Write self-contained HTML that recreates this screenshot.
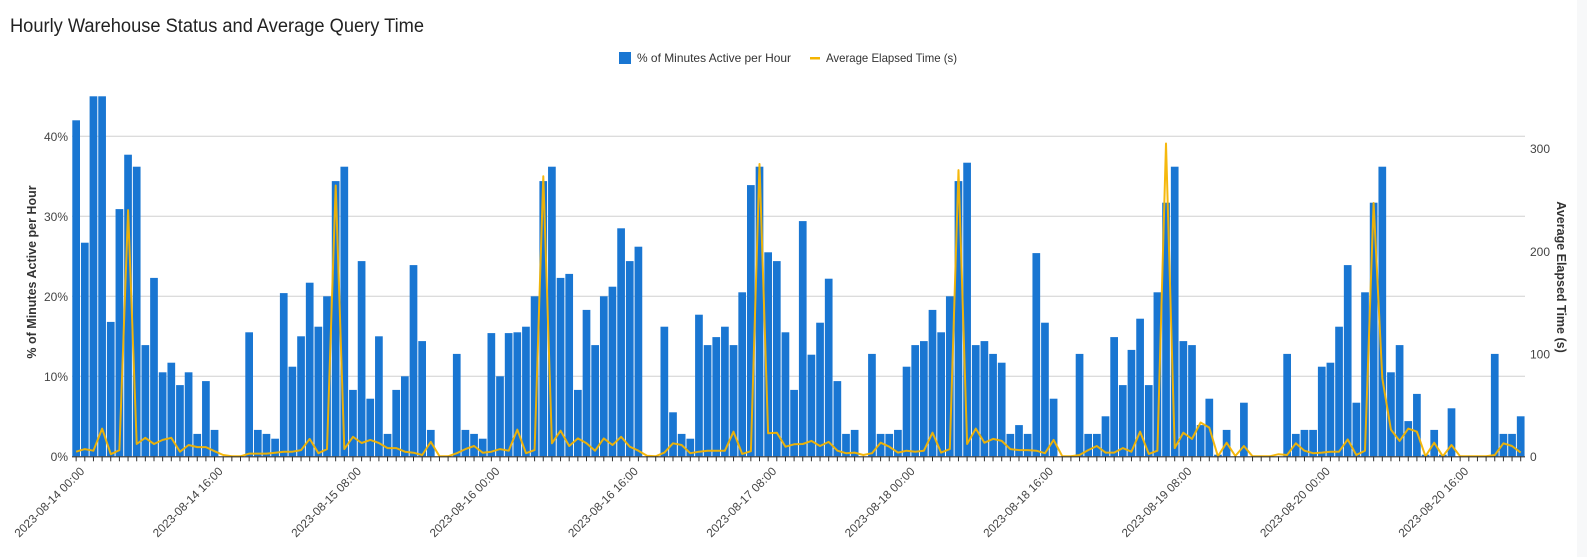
<!DOCTYPE html>
<html><head><meta charset="utf-8">
<style>
html,body{margin:0;padding:0;background:#fff;width:1587px;height:557px;overflow:hidden}
svg{display:block;font-family:"Liberation Sans",Arial,sans-serif}
</style></head>
<body>
<svg id="c" width="1587" height="557" xmlns="http://www.w3.org/2000/svg">
<rect x="1577" y="0" width="10" height="557" fill="#f7f8f9"/>
<text x="10" y="32" font-size="19" fill="#222" textLength="414" lengthAdjust="spacingAndGlyphs">Hourly Warehouse Status and Average Query Time</text>
<rect x="619" y="52" width="12" height="12" fill="#1976d2"/>
<text x="637" y="62" font-size="12" fill="#333" textLength="154" lengthAdjust="spacingAndGlyphs">% of Minutes Active per Hour</text>
<rect x="810" y="57" width="10" height="2.5" fill="#f4b400"/>
<text x="826" y="62" font-size="12" fill="#333" textLength="131" lengthAdjust="spacingAndGlyphs">Average Elapsed Time (s)</text>
<g id="grid"></g>
<g id="bars"></g>
<g id="line"></g>
<g id="axis"></g>
<text transform="translate(36,272) rotate(-90)" text-anchor="middle" font-size="12.5" font-weight="bold" fill="#333">% of Minutes Active per Hour</text>
<text transform="translate(1557,277) rotate(90)" text-anchor="middle" font-size="12.5" font-weight="bold" fill="#333">Average Elapsed Time (s)</text>
</svg>
<script>
var B=[42,26.7,45,45,16.8,30.9,37.7,36.2,13.9,22.3,10.5,11.7,8.9,10.5,2.8,9.4,3.3,0,0,0,15.5,3.3,2.8,2.2,
20.4,11.2,15.0,21.7,16.2,20.0,34.4,36.2,8.3,24.4,7.2,15.0,2.8,8.3,10.0,23.9,14.4,3.3,0,0,12.8,3.3,2.8,2.2,
15.4,10.0,15.4,15.5,16.2,20.0,34.4,36.2,22.3,22.8,8.3,18.3,13.9,20.0,21.2,28.5,24.4,26.2,0,0,16.2,5.5,2.8,2.2,
17.7,13.9,14.9,16.2,13.9,20.5,33.9,36.2,25.5,24.4,15.5,8.3,29.4,12.7,16.7,22.2,9.4,2.8,3.3,0,12.8,2.8,2.8,3.3,
11.2,13.9,14.4,18.3,15.5,20.0,34.4,36.7,13.9,14.4,12.8,11.7,2.8,3.9,2.8,25.4,16.7,7.2,0,0,12.8,2.8,2.8,5.0,
14.9,8.9,13.3,17.2,8.9,20.5,31.7,36.2,14.4,13.9,3.9,7.2,0.2,3.3,0,6.7,0,0,0,0,12.8,2.8,3.3,3.3,
11.2,11.7,16.2,23.9,6.7,20.5,31.7,36.2,10.5,13.9,4.4,7.8,0.2,3.3,0.2,6.0,0,0,0,0,12.8,2.8,2.8,5.0];
var L=[4.5,7,5.5,27,2,6,240,12,18,12,16,18,4.5,11,9,9,5,1.3,0,0,2.6,2.6,2.6,3.5,
4.5,4.5,6,17,3,7,264,7,19,13,16,13,8,8,4.5,3.5,1.3,14,0,0,3,7,10,3.5,
4.5,7,5.5,26,3,6,273,12.7,25,10,17.5,12.7,5.5,17.5,11,19,9.4,5.5,0.6,0,3.6,12.7,11,3,
4.5,5.5,5.5,5.5,24,2.3,5,285,22.4,23,9.4,11.7,12,15,10,14,5.5,3,3.6,1.3,3,13.3,9.4,3.6,
5.5,4.5,5.5,23,3.6,7,279,12,27,13.3,17,15,7,6,6,5.5,3,16,0,0,1.3,6,10,3.6,
3.6,8,4.5,24,2.3,5.5,305,8,23,17,33,28,0,13.3,0.3,10,0,0,0,2,1.3,12.7,5.5,3,
3.6,4.5,4.5,16.5,1.3,5.5,247,76,26,15,27,24,0,13.3,0,11,0,0,0,0,1.3,12.7,10,3.6];
var X0=72.3,P=8.65,Y0=456.3,NS="http://www.w3.org/2000/svg";
function el(t,a,p,txt){var e=document.createElementNS(NS,t);for(var k in a)e.setAttribute(k,a[k]);if(txt!=null)e.textContent=txt;document.getElementById(p).appendChild(e);return e;}
for(var g=1;g<=4;g++){var y=Y0-80*g;el('line',{x1:72,x2:1525,y1:y,y2:y,stroke:'#d0d0d0','stroke-width':1},'grid');
el('text',{x:68,y:y+4.5,'text-anchor':'end','font-size':12,fill:'#444'},'grid',(g*10)+'%');}
el('text',{x:68,y:Y0+4.5,'text-anchor':'end','font-size':12,fill:'#444'},'grid','0%');
[[0,456.5],[100,354],[200,251.5],[300,148.5]].forEach(function(r){el('text',{x:1530,y:r[1]+4.5,'font-size':12,fill:'#444'},'grid',String(r[0]));});
for(var i=0;i<168;i++){var h=B[i]*8;if(h>0)el('rect',{x:X0+i*P,y:Y0-h,width:7.7,height:h,fill:'#1976d2'},'bars');}
var pts=[];for(var i=0;i<168;i++){pts.push((X0+i*P+3.85).toFixed(1)+','+(Y0-L[i]*1.0257).toFixed(1));}
el('polyline',{points:pts.join(' '),fill:'none',stroke:'#f4b400','stroke-width':2,'stroke-linejoin':'round','stroke-opacity':0.95},'line');
el('line',{x1:72,x2:1525,y1:Y0+0.5,y2:Y0+0.5,stroke:'#333','stroke-width':1.2},'axis');
for(var i=0;i<168;i++){var cx=X0+i*P+3.85;el('line',{x1:cx,x2:cx,y1:Y0,y2:Y0+5,stroke:'#333','stroke-width':1},'axis');}
var labs=['2023-08-14 00:00','2023-08-14 16:00','2023-08-15 08:00','2023-08-16 00:00','2023-08-16 16:00','2023-08-17 08:00','2023-08-18 00:00','2023-08-18 16:00','2023-08-19 08:00','2023-08-20 00:00','2023-08-20 16:00'];
for(var j=0;j<labs.length;j++){var cx=X0+16*j*P+3.85;var ax=cx+9,ay=472;
el('text',{'text-anchor':'end','font-size':11.8,fill:'#444',transform:'translate('+ax+','+ay+') rotate(-45)'},'axis',labs[j]);}
</script>
</body></html>
